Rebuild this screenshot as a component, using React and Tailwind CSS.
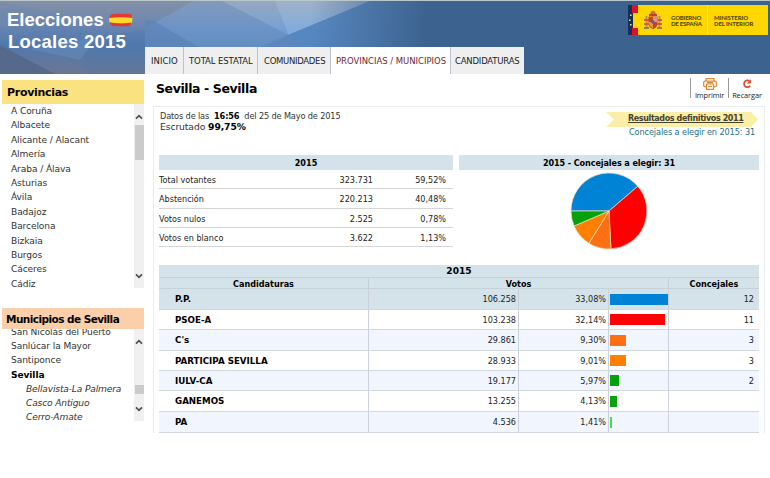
import React from 'react';

const tabs = [
  { label: 'INICIO', box: 'w-[39px] pl-[6px] bg-[#efefef] border-r border-[#bcc3cf]', fit: 'tracking-[0.05px]' },
  { label: 'TOTAL ESTATAL', box: 'w-[74px] pl-[5px] bg-[#efefef] border-r border-[#bcc3cf]', fit: 'tracking-[-0.12px]' },
  { label: 'COMUNIDADES', box: 'w-[73px] pl-[6px] bg-[#efefef] border-r border-[#bcc3cf]', fit: 'tracking-[-0.3px]' },
  { label: 'PROVINCIAS / MUNICIPIOS', box: 'w-[120px] pl-[5px] bg-white border-r border-[#bcc3cf] text-[#722630]', fit: 'tracking-[-0.03px]' },
  { label: 'CANDIDATURAS', box: 'w-[73px] pl-[4px] bg-[#efefef]', fit: 'tracking-[-0.2px]' },
];

const provincias = [
  'A Coruña', 'Albacete', 'Alicante / Alacant', 'Almería', 'Araba / Álava', 'Asturias', 'Ávila',
  'Badajoz', 'Barcelona', 'Bizkaia', 'Burgos', 'Cáceres', 'Cádiz',
];

const municipios = [
  { name: 'San Nicolás del Puerto' },
  { name: 'Sanlúcar la Mayor' },
  { name: 'Santiponce' },
  { name: 'Sevilla', style: 'font-bold text-black' },
  { name: 'Bellavista-La Palmera', style: 'italic pl-[15px] tracking-[-0.15px]' },
  { name: 'Casco Antiguo', style: 'italic pl-[15px] tracking-[-0.15px]' },
  { name: 'Cerro-Amate', style: 'italic pl-[15px] tracking-[-0.15px]' },
];

const totals = [
  ['Total votantes', '323.731', '59,52%'],
  ['Abstención', '220.213', '40,48%'],
  ['Votos nulos', '2.525', '0,78%'],
  ['Votos en blanco', '3.622', '1,13%'],
];

const parties = [
  { name: 'P.P.', votes: '106.258', pct: '33,08%', bar: 57.5, color: '#0083d4', seats: 12, row: 'h-[21px] bg-[#d4e3e9]' },
  { name: 'PSOE-A', votes: '103.238', pct: '32,14%', bar: 55, color: '#fe0000', seats: 11, row: 'h-[20px] bg-white' },
  { name: "C's", votes: '29.861', pct: '9,30%', bar: 15.5, color: '#ff7012', seats: 3, row: 'h-[21px] bg-[#f1f5fe]' },
  { name: 'PARTICIPA SEVILLA', votes: '28.933', pct: '9,01%', bar: 15.5, color: '#ff8000', seats: 3, row: 'h-[20px] bg-white' },
  { name: 'IULV-CA', votes: '19.177', pct: '5,97%', bar: 9, color: '#04a20a', seats: 2, row: 'h-[20px] bg-[#f1f5fe]' },
  { name: 'GANEMOS', votes: '13.255', pct: '4,13%', bar: 7, color: '#0fa00f', row: 'h-[21px] bg-white' },
  { name: 'PA', votes: '4.536', pct: '1,41%', bar: 2, color: '#44dd44', row: 'h-[21px] bg-[#f1f5fe]' },
];

const Chevron = ({ up }) => (
  <svg width="8" height="6" viewBox="0 0 8 6" fill="none" stroke="#505050" strokeWidth="1.7">
    <path d={up ? 'M1 4.6 4 1.6 7 4.6' : 'M1 1.4 4 4.4 7 1.4'} />
  </svg>
);

const HeaderArt = () => (
  <svg className="absolute inset-0" width="770" height="74" viewBox="0 0 770 74">
    <defs>
      <linearGradient id="sky" x1="0" y1="0" x2="0" y2="1">
        <stop offset="0" stopColor="#8590a6" />
        <stop offset="0.3" stopColor="#6f88b0" />
        <stop offset="0.6" stopColor="#5079ae" />
        <stop offset="1" stopColor="#6b7692" />
      </linearGradient>
      <linearGradient id="light" x1="0" y1="0" x2="0" y2="47" gradientUnits="userSpaceOnUse">
        <stop offset="0" stopColor="#8b9ab3" />
        <stop offset="0.6" stopColor="#6990c4" />
        <stop offset="1" stopColor="#5b88bf" />
      </linearGradient>
      <linearGradient id="facet" x1="0" y1="0" x2="0" y2="1">
        <stop offset="0" stopColor="#a0b2c9" />
        <stop offset="1" stopColor="#7caae0" />
      </linearGradient>
      <linearGradient id="fade" x1="0" y1="0" x2="1" y2="0">
        <stop offset="0" stopColor="#3c628f" stopOpacity="0" />
        <stop offset="1" stopColor="#3c628f" />
      </linearGradient>
    </defs>
    <rect width="770" height="74" fill="url(#sky)" />
    <path d="M0 45 55 74H0Z" fill="#55698d" />
    <path d="M0 18 80 60 97 36 54 12 0 2Z" fill="#5a80b3" opacity=".15" />
    <path d="M80 60 97 37 145 30V74H86Z" fill="#4b76ad" opacity=".25" />
    <path d="M97 37 80 60 30 49Z" fill="#749ac9" opacity=".3" />
    <path d="M195 0H450V47H145V26L156 22Z" fill="url(#light)" />
    <path d="M156 22 198 47H145V19Z" fill="#5c82b5" opacity=".6" />
    <path d="M156 22 195 1H226L287 34 260 47H198Z" fill="#769ccb" opacity=".35" />
    <path d="M222 1 287 34 275 1Z" fill="url(#facet)" opacity=".6" />
    <path d="M275 1 288 35 370 1Z" fill="url(#facet)" />
    <path d="M288 35 370 1H450V47H299Z" fill="#5586bf" opacity=".85" />
    <path d="M288 35 299 47H268Z" fill="#5c86bd" />
    <rect x="310" width="118" height="74" fill="url(#fade)" />
    <rect x="428" width="342" height="74" fill="#3c628f" />
    <rect width="770" height="1" fill="#b8c8cb" />
  </svg>
);

const SpanishFlag = () => (
  <svg width="24" height="14" viewBox="0 0 24 14">
    <path d="M1 2.5Q2 .5 8 .7H20Q23 .8 22.5 3L23 5H0Z" fill="#e33b32" />
    <path d="M0 5Q12 3.5 23.5 5L23 10Q12 11.5.5 9.5Z" fill="#ffd92b" />
    <path d="M1 9.5Q12 11.5 22.5 9.5 22 13 18 13.2H6Q1 13 1 9.5Z" fill="#df3930" />
  </svg>
);

const CoatOfArms = () => (
  <svg width="20" height="22" viewBox="0 0 20 22">
    <path d="M7 4 8 1.5 10 .5 12 1.5 13 4Z" fill="#b67b28" />
    <path d="M6 4H14V6H6Z" fill="#c33e2c" />
    <path d="M2.5 6H4.5V18H2.5ZM15.5 6H17.5V18H15.5Z" fill="#c58c58" />
    <path d="M1 10H6M14 10H19M1 14H6M14 14H19" stroke="#c34b33" strokeWidth="1.4" />
    <path d="M1 18H6M14 18H19" stroke="#868657" strokeWidth="1.8" />
    <path d="M5.5 6.5H14.5V14Q14 18 10 19 6 18 5.5 14Z" fill="#c73f36" />
    <path d="M10 6.5H14.5V12H10Z" fill="#cf9b91" />
    <path d="M5.5 12H10V18Q6 17 5.5 12Z" fill="#dd9d30" />
    <circle cx="10" cy="12" r="1.7" fill="#5c5b88" />
  </svg>
);

const GovernmentLogo = () => (
  <div className="absolute left-[628px] top-[5px] w-[140px] h-[30px] flex bg-[#fed700] font-['Lato',sans-serif] font-black text-[6px] leading-[6px] text-[#544c16]">
    <svg width="10" height="30" viewBox="0 0 10 30">
      <rect width="10" height="30" fill="#182f55" />
      <path d="M4 0H10V8H4ZM4 23H10V30H4Z" fill="#df102b" />
      <path d="M5 8H10V23H5Z" fill="#fed700" />
      <path d="M1 14.5H2.5V16H1ZM2 9.5H3.5V11H2ZM2 19H3.5V20.5H2Z" fill="#e9e296" />
    </svg>
    <div className="w-[33px] pl-[5px] pt-[5px]"><CoatOfArms /></div>
    <div className="w-[36px] pt-[10px] whitespace-nowrap tracking-[-0.22px]">GOBIERNO<br />DE ESPAÑA</div>
    <div className="w-[61px] pl-[6px] pt-[10px] whitespace-nowrap border-l border-[#ffe262] tracking-[-0.1px]">MINISTERIO<br />DEL INTERIOR</div>
  </div>
);

const slicePath = (from, to) => {
  const point = (seats) => {
    const a = Math.PI + (seats / 31) * 2 * Math.PI;
    return `${39 + 38 * Math.cos(a)} ${39 + 38 * Math.sin(a)}`;
  };
  return `M39 39L${point(from)}A38 38 0 0 1 ${point(to)}Z`;
};

const SeatsPie = () => {
  let total = 0;
  return (
    <svg width="78" height="78" viewBox="0 0 78 78">
      {parties.filter((p) => p.seats).map((p) => {
        const from = total;
        total += p.seats;
        return <path key={p.name} d={slicePath(from, total)} fill={p.color} stroke="#f6dcc8" strokeWidth="0.7" />;
      })}
    </svg>
  );
};

const Sidebar = () => (
  <div className="w-[153px] pl-[2px] pt-[6px]">
    <div className="w-[142px] h-[24px] pl-[5px] pt-[2px] flex items-center bg-[#fbe281] text-[11px] font-bold text-black">
      <span className="tracking-[-0.3px]">Provincias</span>
    </div>
    <div className="w-[142px] h-[184px] flex justify-between">
      <div className="pl-[9px] text-[9.1px] leading-[14.4px] tracking-[-0.1px] text-[#333]">
        {provincias.map((name) => <div key={name}>{name}</div>)}
      </div>
      <div className="w-[10px] pt-[10px] pb-[9px] flex flex-col items-center bg-[#f0f0f0]">
        <Chevron up />
        <div className="w-[9px] h-[35px] mt-[5px] mb-auto bg-[#cbcbcb]"></div>
        <Chevron />
      </div>
    </div>
    <div className="w-[142px] h-[21px] mt-[20px] pl-[4px] pt-[3px] flex items-center bg-[#facfa9] text-[10.5px] font-bold text-black">
      <span className="tracking-[-0.55px] whitespace-nowrap">Municipios de Sevilla</span>
    </div>
    <div className="w-[142px] h-[92px] flex justify-between overflow-hidden">
      <div className="-mt-[4px] pl-[9px] text-[9.1px] leading-[14.2px] tracking-[-0.1px] text-[#333] whitespace-nowrap">
        {municipios.map((m) => <div key={m.name} className={m.style}>{m.name}</div>)}
      </div>
      <div className="w-[10px] pt-[10px] pb-[9px] flex flex-col items-center bg-[#f0f0f0]">
        <Chevron up />
        <div className="w-[9px] h-[9px] mt-auto mb-[12px] bg-[#cbcbcb]"></div>
        <Chevron />
      </div>
    </div>
  </div>
);

const Toolbar = () => (
  <div className="h-[32px] flex justify-between">
    <h1 className="pl-[3px] pt-[5px] text-[12.5px] leading-[20px] font-bold text-black tracking-[-0.4px]">Sevilla - Sevilla</h1>
    <div className="flex pt-[4px] text-[7.4px] leading-[10px] font-['Open_Sans',sans-serif] text-[#222]">
      <div className="w-[38px] h-[20px] flex flex-col items-center border-l border-[#999]">
        <svg className="shrink-0" width="14" height="12" viewBox="0 0 14 12" fill="none" stroke="#df8934" strokeWidth="1.2">
          <path d="M3 3V.7H11V3M3 8.7H1.6Q.7 8.7.7 7.5V4.5Q.7 3.2 2 3.2H12Q13.3 3.2 13.3 4.5V7.5Q13.3 8.7 12.4 8.7H11" />
          <path d="M3.5 6H10.5V11.3H3.5ZM5 8.5H9M4 4.6H10" />
        </svg>
        <span className="tracking-[-0.1px]">Imprimir</span>
      </div>
      <div className="w-[37px] h-[20px] flex flex-col items-center border-l border-[#999]">
        <svg className="shrink-0" width="12" height="12" viewBox="0 0 12 12" fill="none">
          <path d="M8.5 3.1A3.4 3.4 0 1 0 9.2 7.8" stroke="#dc5036" strokeWidth="1.8" />
          <path d="M9.9 1V5.4H5.8Z" fill="#dc5036" />
        </svg>
        <span className="tracking-[-0.1px]">Recargar</span>
      </div>
    </div>
  </div>
);

const Summary = () => (
  <div className="flex justify-between h-[48px]">
    <div className="pl-px pt-[4px] text-[8.2px] leading-[10.5px] text-[#333]">
      <div className="tracking-[-0.14px] whitespace-pre">Datos de las  <b className="text-black">16:56</b>  del 25 de Mayo de 2015</div>
      <div className="text-[9.2px] tracking-[-0.08px]">Escrutado <b className="text-black">99,75%</b></div>
    </div>
    <div className="pt-[5px] w-[153px]">
      <div className="relative h-[15px] pl-[22px]">
        <svg className="absolute left-0 top-0" width="153" height="15" viewBox="0 0 153 15">
          <path d="M0 0H145L152 7.5 145 15H0L8 7.5Z" fill="#fbeea8" />
        </svg>
        <div className="relative text-[8px] leading-[14px] font-bold underline text-[#47432b] tracking-[-0.38px] whitespace-nowrap">Resultados definitivos 2011</div>
      </div>
      <div className="pl-[23px] text-[8.2px] leading-[11px] text-[#28707c] tracking-[-0.12px] whitespace-nowrap">Concejales a elegir en 2015: 31</div>
    </div>
  </div>
);

const Results = () => (
  <div className="mt-[15px] text-[8.1px] text-[#222]">
    <div className="h-[13px] leading-[13px] text-[9.1px] text-center bg-[#d4e3e9] font-bold text-black border-b border-[#c5d2da]">2015</div>
    <div className="h-[11px] leading-[12px] flex text-center bg-[#d4e3e9] font-bold text-black border-b border-[#c5d2da]">
      <div className="w-[210px] border-r border-[#c5cfda]">Candidaturas</div>
      <div className="w-[300px] border-r border-[#c5cfda]">Votos</div>
      <div className="w-[90px]">Concejales</div>
    </div>
    {parties.map((p) => (
      <div key={p.name} className={`flex items-stretch border-b border-[#d1d8e0] leading-[20px] ${p.row}`}>
        <div className="w-[210px] pl-[16px] text-[8.7px] font-bold text-black border-r border-[#cbd1dc]">{p.name}</div>
        <div className="w-[150px] pr-[2px] text-right border-r border-[#cbd1dc]">{p.votes}</div>
        <div className="w-[90px] pr-[2px] text-right border-r border-[#cbd1dc]">{p.pct}</div>
        <div className="w-[60px] pl-px flex items-center border-r border-[#cbd1dc]">
          <div className="h-[11px]" style={{ width: p.bar, backgroundColor: p.color }}></div>
        </div>
        <div className="w-[90px] pr-[5px] text-right">{p.seats}</div>
      </div>
    ))}
  </div>
);

const App = () => {
  return (
    <div className="w-[770px] h-[478px] overflow-hidden bg-white font-['DejaVu_Sans',sans-serif]">
      <header className="relative h-[74px] flex flex-col">
        <HeaderArt />
        <GovernmentLogo />
        <div className="relative w-[145px] pl-[7px] pt-[9px] font-['Liberation_Sans',sans-serif] font-bold text-[18.5px] leading-[22px] text-white whitespace-nowrap">
          <div className="flex items-center gap-[5px]">Elecciones <SpanishFlag /></div>
          <div className="pl-px tracking-[0.23px]">Locales 2015</div>
        </div>
        <nav className="relative -mt-[6px] ml-[145px] flex text-[8.5px] leading-[28px] h-[27px] text-[#222]">
          {tabs.map((tab) => (
            <a key={tab.label} href="#" className={`whitespace-nowrap ${tab.box} ${tab.fit}`}>{tab.label}</a>
          ))}
        </nav>
      </header>

      <div className="flex">
        <Sidebar />
        <main className="w-[612px]">
          <Toolbar />
          <div className="h-[327px] px-[5px] border-x border-t border-[#e8edef]">
            <Summary />
            <div className="flex gap-[6px] text-[8.1px] text-[#222]">
              <div className="w-[294px]">
                <div className="h-[15px] leading-[16px] text-center font-bold text-black bg-[#d4e3e9]">2015</div>
                {totals.map(([label, count, pct]) => (
                  <div key={label} className="h-[19.33px] leading-[20px] flex border-b border-[#d5d5d5]">
                    <div className="w-[114px]">{label}</div>
                    <div className="w-[100px] text-right">{count}</div>
                    <div className="w-[73px] text-right">{pct}</div>
                  </div>
                ))}
              </div>
              <div className="w-[300px]">
                <div className="h-[15px] leading-[16px] text-center font-bold text-black bg-[#d4e3e9] tracking-[-0.1px]">2015 - Concejales a elegir: 31</div>
                <div className="pt-[2px] flex justify-center"><SeatsPie /></div>
              </div>
            </div>
            <Results />
          </div>
        </main>
      </div>
    </div>
  );
};

export default App;
